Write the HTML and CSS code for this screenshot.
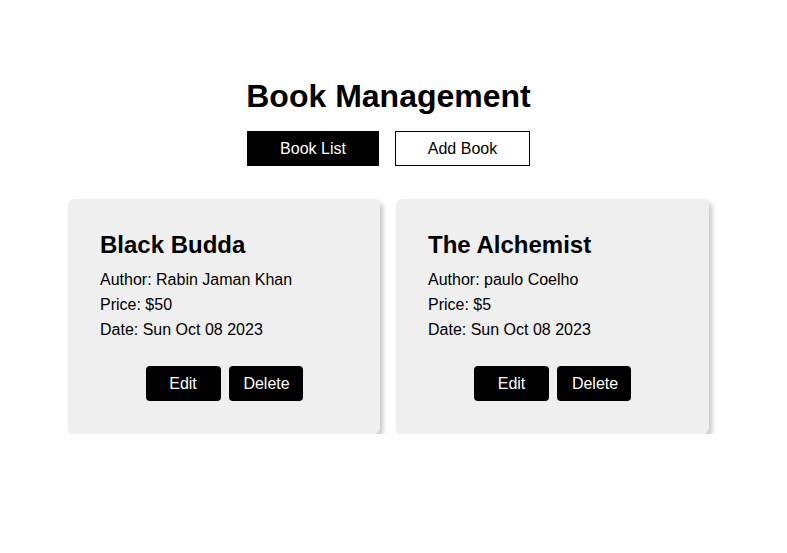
FILE: index.html
```html
<!DOCTYPE html>
<html>
<head>
<meta charset="utf-8">
<link rel="stylesheet" href="styles.css">
</head>
<body>
<div class="app">
  <h1 class="title">Book Management</h1>
  <div class="tabs">
    <button class="tab tab-active">Book List</button>
    <button class="tab">Add Book</button>
  </div>
  <div class="cards">
    <div class="card">
      <h2 class="card-title">Black Budda</h2>
      <p class="card-line">Author: Rabin Jaman Khan</p>
      <p class="card-line">Price: $50</p>
      <p class="card-line">Date: Sun Oct 08 2023</p>
      <div class="actions">
        <button class="action action-edit">Edit</button>
        <button class="action action-delete">Delete</button>
      </div>
    </div>
    <div class="card">
      <h2 class="card-title">The Alchemist</h2>
      <p class="card-line">Author: paulo Coelho</p>
      <p class="card-line">Price: $5</p>
      <p class="card-line">Date: Sun Oct 08 2023</p>
      <div class="actions">
        <button class="action action-edit">Edit</button>
        <button class="action action-delete">Delete</button>
      </div>
    </div>
  </div>
</div>
</body>
</html>
```

FILE: styles.css
```css
* { box-sizing: border-box; }
html, body { margin: 0; padding: 0; background: #fff; }
body {
  font-family: "Liberation Sans", Arial, sans-serif;
  color: #000;
}
.app {
  display: flex;
  flex-direction: column;
  align-items: center;
  padding-top: 78px;
  padding-right: 10px;
}
.title {
  margin: 0;
  font-size: 32px;
  font-weight: bold;
  line-height: 37px;
}
.tabs {
  display: flex;
  gap: 16px;
  margin-top: 16px;
}
.tab {
  font-family: inherit;
  font-size: 16px;
  height: 35px;
  line-height: 19px;
  padding: 0;
  text-align: center;
  white-space: nowrap;
  border: 1px solid #000;
  background: #fff;
  color: #000;
  cursor: pointer;
}
.tab-active {
  background: #000;
  color: #fff;
  width: 132px;
}
.tabs .tab:not(.tab-active) { width: 135px; }
.cards {
  display: flex;
  gap: 16px;
  margin-top: 33px;
}
.card {
  width: 312px;
  height: 235px;
  background: #efefef;
  border-radius: 6px;
  box-shadow: 3px 3px 5px rgba(0, 0, 0, 0.22);
  padding: 32px 32px 0 32px;
}
.card + .card { width: 313px; }
.card-title {
  margin: 0 0 8px 0;
  font-size: 24px;
  line-height: 28px;
  font-weight: bold;
}
.card-line {
  margin: 0;
  font-size: 16px;
  line-height: 25px;
}
.actions {
  display: flex;
  justify-content: center;
  gap: 8px;
  margin-top: 24px;
}
.action {
  font-family: inherit;
  font-size: 16px;
  height: 35px;
  padding: 0;
  border: none;
  border-radius: 4px;
  background: #000;
  color: #fff;
  cursor: pointer;
}
.action-edit { width: 75px; }
.action-delete { width: 74px; padding-left: 2px; }
```
